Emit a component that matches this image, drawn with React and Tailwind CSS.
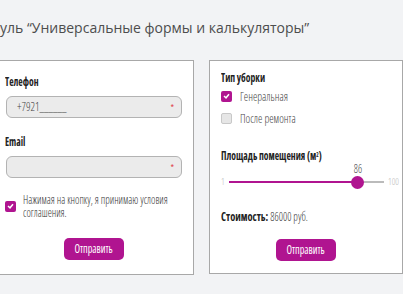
import React, { useState } from "react";

const narrow = { fontFamily: '"Open Sans", sans-serif', fontStretch: "75%" };

function Check({ checked, onClick }) {
  return (
    <button
      type="button"
      onClick={onClick}
      className={
        "w-[11px] h-[11px] shrink-0 rounded-[2px] flex items-center justify-center " +
        (checked ? "bg-[#b01490]" : "bg-[#e6e6e6] border border-[#c8c8c8]")
      }
    >
      {checked && (
        <svg width="7" height="6" viewBox="0 0 7 6">
          <path d="M1 3 L3 4.8 L6 1.2" stroke="#fff" strokeWidth="1.5" fill="none" />
        </svg>
      )}
    </button>
  );
}

function Label({ children }) {
  return (
    <div className="text-[13px] font-bold text-[#222] leading-[14px] whitespace-nowrap origin-left scale-x-[0.74]">
      {children}
    </div>
  );
}

function Field({ label, value }) {
  return (
    <div>
      <Label>{label}</Label>
      <div className="mt-[8px] h-[22px] w-[176px] ml-[1px] rounded-[6px] border border-[#b3b3b3] bg-[#ebebeb] flex items-center justify-between pl-[10px] pr-[7px]">
        <span className="text-[13px] font-light text-[#444] inline-block origin-left scale-x-[0.85]">{value}</span>
        <span className="text-[9px] text-[#e0404a] leading-none">*</span>
      </div>
    </div>
  );
}

export default function App() {
  const [agree, setAgree] = useState(true);
  const [type, setType] = useState("general");
  const [area, setArea] = useState(86);
  const frac = (area - 1) / 99;

  return (
    <div className="w-[403px] h-[294px] overflow-hidden bg-[#f2f3f5]">
      <div className="pt-[18px] h-[60px] text-[14px] text-[#4d4d4d] leading-[20px] whitespace-nowrap" style={{ fontFamily: '"Open Sans", sans-serif' }}>
        уль “Универсальные формы и калькуляторы”
      </div>
      <div className="flex gap-[15px] items-start" style={narrow}>
        <div className="-ml-[10px] w-[204px] h-[215px] bg-white border border-[#a8a8a8] pl-[14px] pt-[13px]">
          <Field label="Телефон" value="+7921______" />
          <div className="mt-[16px]">
            <Field label="Email" value="" />
          </div>
          <div className="mt-[15px] flex items-center gap-[7px]">
            <Check checked={agree} onClick={() => setAgree(!agree)} />
            <span className="text-[13px] font-light text-[#333] leading-[13px] whitespace-nowrap inline-block origin-left scale-x-[0.8]">
              Нажимая на кнопку, я принимаю условия<br />соглашения.
            </span>
          </div>
          <div className="mt-[19px] ml-[59px]">
            <button className="w-[60px] h-[22px] rounded-[5px] bg-[#b01490] text-white text-[12px] flex items-center justify-center">
              <span className="inline-block scale-x-[0.85]">Отправить</span>
            </button>
          </div>
        </div>
        <div className="w-[200px] h-[214px] bg-white border border-[#a8a8a8] pl-[11px] pt-[9px]">
          <Label>Тип уборки</Label>
          <div className="mt-[6px] flex items-center gap-[8px]">
            <Check checked={type === "general"} onClick={() => setType("general")} />
            <span className="text-[13px] font-light text-[#444] leading-[12px] inline-block origin-left scale-x-[0.85]">Генеральная</span>
          </div>
          <div className="mt-[10px] flex items-center gap-[8px]">
            <Check checked={type === "repair"} onClick={() => setType("repair")} />
            <span className="text-[13px] font-light text-[#444] leading-[12px] inline-block origin-left scale-x-[0.85]">После ремонта</span>
          </div>
          <div className="mt-[24px]">
            <Label>
              Площадь помещения (м<sup className="text-[7px]">2</sup>)
            </Label>
          </div>
          <div className="h-[30px] w-[178px] flex items-center pt-[10px] gap-[4px]">
            <span className="text-[9px] font-light text-[#bbb]">1</span>
            <div className="relative flex-1 h-[2px] bg-[#bbb]">
              <div className="h-full bg-[#b01490]" style={{ width: `calc(6px + ${frac} * (100% - 12px))` }} />
              <div
                className="absolute top-1/2 w-[13px] h-[13px] -mt-[6.5px] -ml-[6.5px] rounded-full bg-[#b01490]"
                style={{ left: `calc(6px + ${frac} * (100% - 12px))` }}
              />
              <span
                className="absolute -top-[21px] -ml-[5px] text-[12px] font-light text-[#444] scale-x-[0.85]"
                style={{ left: `calc(6px + ${frac} * (100% - 12px))` }}
              >
                {area}
              </span>
            </div>
            <span className="text-[9px] font-light text-[#bbb]">100</span>
          </div>
          <div className="mt-[17px] text-[13px] font-light text-[#333] leading-[14px] whitespace-nowrap origin-left scale-x-[0.8]">
            <b className="font-bold text-[13px] text-[#222]">Стоимость:</b> {area * 1000} руб.
          </div>
          <div className="mt-[16px] ml-[55px]">
            <button onClick={() => setArea(area)} className="w-[60px] h-[22px] rounded-[5px] bg-[#b01490] text-white text-[12px] flex items-center justify-center">
              <span className="inline-block scale-x-[0.85]">Отправить</span>
            </button>
          </div>
        </div>
      </div>
    </div>
  );
}
